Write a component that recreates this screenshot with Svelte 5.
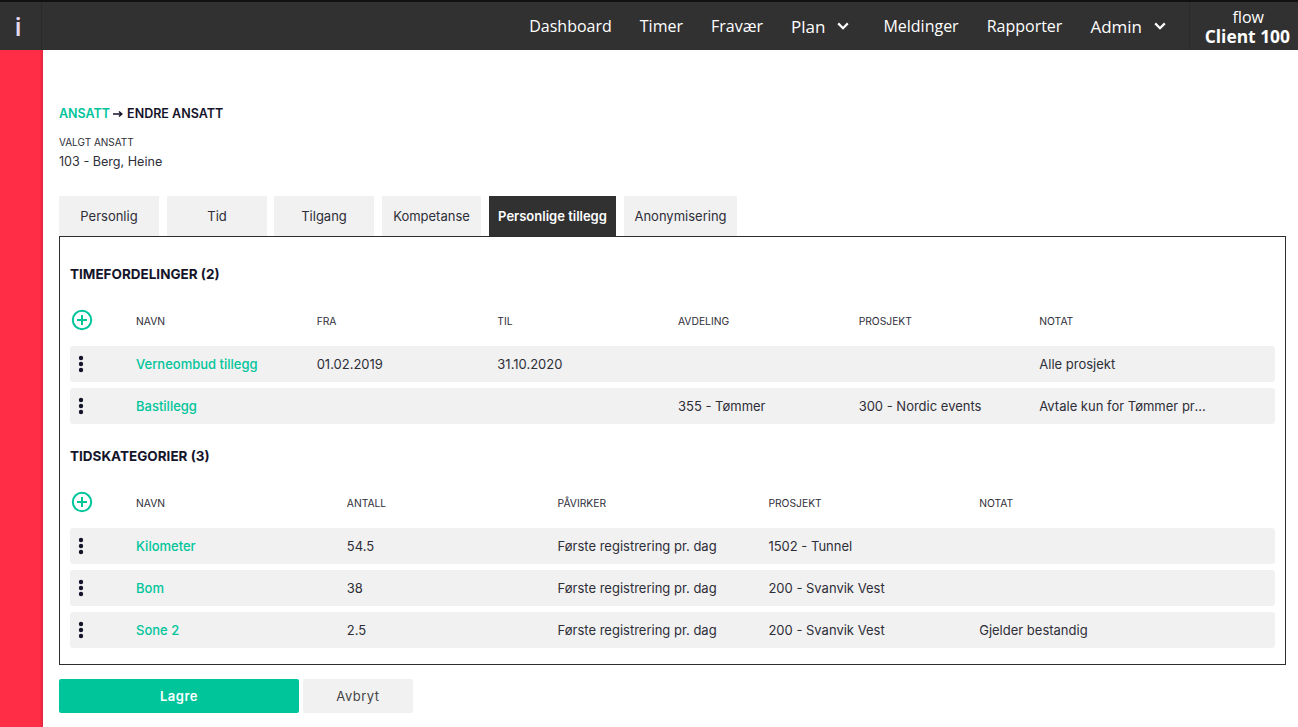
<script>
  const nav = [
    { label: 'Dashboard' }, { label: 'Timer' }, { label: 'Fravær' }, { label: 'Plan', caret: true },
    { label: 'Meldinger' }, { label: 'Rapporter' }, { label: 'Admin', caret: true }
  ];
  const tabs = [
    { label: 'Personlig', w: 100 }, { label: 'Tid', w: 100 }, { label: 'Tilgang', w: 100 }, { label: 'Kompetanse', w: 99 },
    { label: 'Personlige tillegg', w: 127, active: true }, { label: 'Anonymisering', w: 113 }
  ];
  const t1 = {
    title: 'TIMEFORDELINGER (2)', cls: 'six',
    head: ['NAVN', 'FRA', 'TIL', 'AVDELING', 'PROSJEKT', 'NOTAT'],
    rows: [
      ['Verneombud tillegg', '01.02.2019', '31.10.2020', '', '', 'Alle prosjekt'],
      ['Bastillegg', '', '', '355 - Tømmer', '300 - Nordic events', 'Avtale kun for Tømmer prosjekter i Nord']
    ]
  };
  const t2 = {
    title: 'TIDSKATEGORIER (3)', cls: 'five',
    head: ['NAVN', 'ANTALL', 'PÅVIRKER', 'PROSJEKT', 'NOTAT'],
    rows: [
      ['Kilometer', '54.5', 'Første registrering pr. dag', '1502 - Tunnel', ''],
      ['Bom', '38', 'Første registrering pr. dag', '200 - Svanvik Vest', ''],
      ['Sone 2', '2.5', 'Første registrering pr. dag', '200 - Svanvik Vest', 'Gjelder bestandig']
    ]
  };
  const tables = [t1, t2];
</script>

<div class="page">
  <header class="top">
    <div class="logo">i</div>
    <nav class="nav">
      {#each nav as n}
        <span class="item" class:has-caret={n.caret}>{n.label}{#if n.caret}<svg class="caret" width="12" height="8" viewBox="0 0 12 8"><path d="M1.2 1.4 6 6.2l4.8-4.8" fill="none" stroke="#fff" stroke-width="2.2"/></svg>{/if}</span>
      {/each}
    </nav>
    <div class="client"><span>flow</span><b>Client 100</b></div>
  </header>
  <div class="body">
    <aside class="side"></aside>
    <main class="main">
      <div class="crumb"><span class="green">ANSATT</span><svg class="arrow" width="10" height="8" viewBox="0 0 10 8"><path d="M0 4h8M6 1.5 8.8 4 6 6.5" fill="none" stroke="#14142b" stroke-width="1.5"/></svg>ENDRE ANSATT</div>
      <div class="sel-label">VALGT ANSATT</div>
      <div class="sel-val">103 - Berg, Heine</div>
      <div class="tabs">
        {#each tabs as t}
          <div class="tab" class:active={t.active} style="width:{t.w}px">{t.label}</div>
        {/each}
      </div>
      <section class="panel">
        {#each tables as t}
          <h2>{t.title}</h2>
          <div class="grid head {t.cls}">
            <svg class="plus" width="22" height="22" viewBox="0 0 22 22"><circle cx="11" cy="11" r="9.2" fill="none" stroke="#00c59b" stroke-width="2"/><path d="M11 6v10M6 11h10" stroke="#00c59b" stroke-width="2"/></svg>
            {#each t.head as h}<span>{h}</span>{/each}
          </div>
          {#each t.rows as r}
            <div class="grid row {t.cls}">
              <svg class="dots" width="6" height="18" viewBox="0 0 6 18"><circle cx="3" cy="3" r="2.2"/><circle cx="3" cy="9" r="2.2"/><circle cx="3" cy="15" r="2.2"/></svg>
              {#each r as c, i}<span class="cell" class:green={i === 0}>{c}</span>{/each}
            </div>
          {/each}
        {/each}
      </section>
      <div class="actions">
        <button class="save">Lagre</button>
        <button class="cancel">Avbryt</button>
      </div>
    </main>
  </div>
</div>

<style>
  :global(body) { margin: 0; background: #fff; }
  .page { width: 1298px; height: 727px; overflow: hidden; font-family: "Inter", "Liberation Sans", sans-serif; color: #2e2e38; }
  .top { height: 50px; box-sizing: border-box; background: #313131; border-top: 2px solid #111; display: flex; align-items: center; }
  .logo { width: 42px; height: 48px; border-right: 1px solid #2a2a2a; display: flex; align-items: center; justify-content: center; color: #e4d8f0; font: 600 26px "Open Sans", sans-serif; padding-right: 5px; box-sizing: border-box; }
  .nav { flex: 1; display: flex; justify-content: flex-end; gap: 28px; padding-right: 17px; font: 16px "Open Sans", sans-serif; color: #fff; }
  .item { display: flex; align-items: center; }
  .has-caret { font-size: 17px; }
  .caret { margin-left: 12px; margin-right: 6px; }
  .client { width: 109px; height: 48px; box-sizing: border-box; border-left: 1px solid #2a2a2a; display: flex; flex-direction: column; align-items: flex-end; padding: 2px 8px 0 0; color: #fff; font: 16px/19px "Open Sans", sans-serif; justify-content: center; }
  .client span { margin-right: 26px; }
  .client b { font-weight: 700; font-size: 17.4px; }
  .body { display: flex; height: 677px; }
  .side { width: 43px; background: #ff2d46; box-shadow: inset -3px 0 3px -2px rgba(0,0,0,.18); flex: none; }
  .main { flex: 1; padding: 55px 12px 0 16px; }
  .crumb { font-size: 12.5px; font-weight: 600; line-height: 17px; color: #14142b; }
  .green { color: #00c59b; }
  .arrow { margin: 0 4px 0 3px; }
  .sel-label { font-size: 10px; margin-top: 13px; line-height: 14px; }
  .sel-val { font-size: 12.6px; margin-top: 4px; line-height: 17px; }
  .tabs { display: flex; gap: 8px; margin-top: 26px; height: 40px; }
  .tab { background: #f1f1f1; display: flex; align-items: center; justify-content: center; font-size: 13px; white-space: nowrap; }
  .tab:nth-child(2) { margin-right: -1px; }
  .tab.active { background: #313131; color: #fff; font-weight: 600; }
  .panel { border: 1px solid #2e2e2e; box-sizing: border-box; height: 429px; padding: 0 10px; }
  h2 { margin: 0 0 13px; padding-top: 29px; font-size: 13.5px; font-weight: 700; color: #14142b; line-height: 17px; }
  .row + h2 { padding-top: 18px; }
  .grid { display: grid; align-items: center; }
  .six { grid-template-columns: 66px repeat(6, 180.67px); }
  .five { grid-template-columns: 66px repeat(5, 210.8px); }
  .head { height: 50px; font-size: 10.3px; }
  .plus { margin: 0 0 2px 1px; }
  .row { height: 36px; background: #f1f1f1; border-radius: 3px; margin-bottom: 6px; font-size: 13px; }
  .dots { margin-left: 8px; fill: #14142b; }
  .cell { white-space: nowrap; overflow: hidden; text-overflow: ellipsis; padding-right: 10px; }
  .cell.green { font-weight: 500; }
  .actions { display: flex; gap: 4px; margin-top: 14px; }
  button { border: 0; height: 34px; border-radius: 2px; font-family: inherit; font-size: 13px; letter-spacing: 0.5px; padding: 0; }
  .save { width: 240px; background: #00c59b; color: #fff; font-weight: 600; }
  .cancel { width: 110px; background: #f1f1f1; color: #444; }
</style>
